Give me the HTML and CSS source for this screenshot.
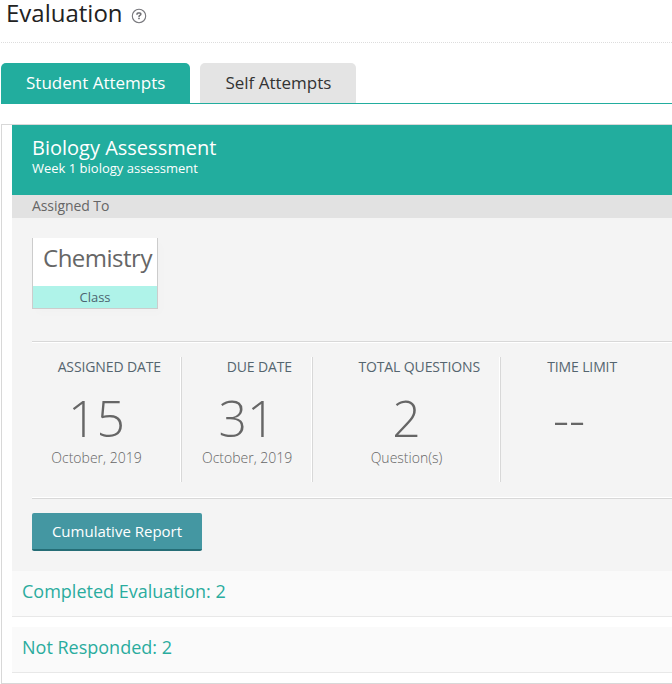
FILE: index.html
```
<!DOCTYPE html>
<html lang="en">

<head>
    <meta charset="utf-8" />
    <title>Evaluation</title>
    <link rel="stylesheet" href="styles.css">
</head>

<body>

    <div class="page-title">
        <h1>Evaluation</h1>
        <svg class="help" width="16" height="16" viewBox="0 0 16 16">
            <circle cx="8" cy="8" r="6.7" fill="none" stroke="#77777c" stroke-width="1.1" />
            <path d="M6 6.7V5.9Q6 4.9 7 4.9H8.8Q9.9 4.9 9.9 6.1Q9.9 7 8.9 7.4Q8 7.8 8 8.9" fill="none" stroke="#6d6d72" stroke-width="1.5" />
            <rect x="7.2" y="9.7" width="1.6" height="1.5" fill="#6d6d72" />
        </svg>
    </div>

    <div class="tabs">
        <a class="tab active">Student Attempts</a>
        <a class="tab">Self Attempts</a>
    </div>

    <div class="panel">
        <div class="header">
            <h2>Biology Assessment</h2>
            <p>Week 1 biology assessment</p>
        </div>
        <div class="assigned">Assigned To</div>
        <div class="details">
            <div class="group">
                <div class="group-name">Chemistry</div>
                <div class="group-type">Class</div>
            </div>
            <div class="stats">
                <div class="stat first">
                    <h3>ASSIGNED DATE</h3>
                    <div class="number">15</div>
                    <div class="note">October, 2019</div>
                </div>
                <div class="stat due">
                    <h3>DUE DATE</h3>
                    <div class="number">31</div>
                    <div class="note">October, 2019</div>
                </div>
                <div class="stat questions">
                    <h3>TOTAL QUESTIONS</h3>
                    <div class="number">2</div>
                    <div class="note">Question(s)</div>
                </div>
                <div class="stat limit">
                    <h3>TIME LIMIT</h3>
                    <div class="number">--</div>
                </div>
            </div>
            <a class="button">Cumulative Report</a>
        </div>
        <div class="row">Completed Evaluation: 2</div>
        <div class="row">Not Responded: 2</div>
    </div>

</body>

</html>
```

FILE: styles.css
```
* {
    box-sizing: border-box;
}

body {
    margin: 0;
    background-color: white;
    font-family: "Open Sans", sans-serif;
    color: #666;
    overflow: hidden;
}

h1, h2, h3, p {
    margin: 0;
    font-weight: normal;
}

.page-title {
    display: flex;
    height: 43px;
    margin-left: 1px;
    padding-left: 5px;
    border-bottom: 1px dotted #ddd;
}

h1 {
    font-size: 24px;
    line-height: 26px;
    color: #222;
}

.help {
    margin: 8px 0 0 8px;
}

.tabs {
    display: flex;
    gap: 10px;
    height: 41px;
    margin: 20px 0 0 1px;
    border-bottom: 1px solid #22ad9e;
}

.tab {
    height: 40px;
    padding: 0 25px;
    border-radius: 5px 5px 0 0;
    background-color: #e4e4e4;
    color: #333;
    font-size: 17px;
    line-height: 40px;
}

.tab.active {
    height: 41px;
    background-color: #22ad9e;
    color: white;
}

.panel {
    height: 560px;
    margin: 20px 0 0 1px;
    padding-left: 10px;
    border: 1px solid #d8d8d8;
    border-right: 0;
}

.header {
    height: 70px;
    padding: 9px 20px 0;
    background-color: #22ad9e;
    color: white;
}

h2 {
    font-size: 20px;
    line-height: 27px;
}

.header p {
    font-size: 13px;
    line-height: 14px;
}

.assigned {
    height: 23px;
    padding-left: 20px;
    background-color: #e2e2e2;
    font-size: 14px;
    line-height: 22px;
    letter-spacing: -0.08px;
}

.details {
    height: 353px;
    padding: 20px 0 0 20px;
    background-color: #f4f4f4;
}

.group {
    width: 126px;
    height: 71px;
    border: 1px solid #ccc;
    border-top: 0;
    background-color: white;
    text-align: center;
    box-shadow: 4px 5px 8px rgba(0, 0, 0, 0.01);
}

.group-name {
    height: 48px;
    padding-left: 5px;
    font-size: 24px;
    line-height: 39px;
    letter-spacing: -0.5px;
}

.group-type {
    height: 22px;
    background-color: #aff3e9;
    color: #4c6470;
    font-size: 13px;
    line-height: 23px;
}

.stats {
    display: flex;
    height: 158px;
    margin-top: 32px;
    padding: 14px 0 15px;
    border-top: 1px solid #d8d8d8;
    border-bottom: 1px solid #d8d8d8;
    box-shadow: inset 0 1px white, inset 0 -1px white;
}

.stat {
    height: 125px;
    margin-top: 1px;
    padding: 0 20px;
    border-right: 1px solid #d8d8d8;
    box-shadow: inset -1px 0 white;
    text-align: center;
}

.first {
    width: 150px;
    padding-left: 0;
}

.due {
    width: 131px;
}

.questions {
    width: 188px;
}

.limit {
    width: 136px;
    border-right: 0;
    box-shadow: none;
}

h3 {
    color: #55656f;
    font-size: 14px;
    line-height: 20px;
    letter-spacing: -0.12px;
    text-align: right;
    white-space: nowrap;
}

.number {
    font-size: 50px;
    font-weight: 300;
    line-height: 68px;
    margin-top: 7px;
}

.note {
    font-size: 14px;
    font-weight: 300;
    line-height: 20px;
    margin-top: -4px;
    white-space: nowrap;
}

.button {
    display: block;
    width: 170px;
    height: 38px;
    margin-top: 14px;
    border-bottom: 2px solid #256d76;
    border-radius: 2px;
    background-color: #4497a2;
    color: white;
    font-size: 15px;
    line-height: 37px;
    text-align: center;
}

.row {
    height: 46px;
    margin-bottom: 10px;
    padding-left: 10px;
    border-bottom: 1px solid #e8e8e8;
    background-color: #fafafa;
    color: #2aac9e;
    font-size: 18px;
    line-height: 41px;
}
```
